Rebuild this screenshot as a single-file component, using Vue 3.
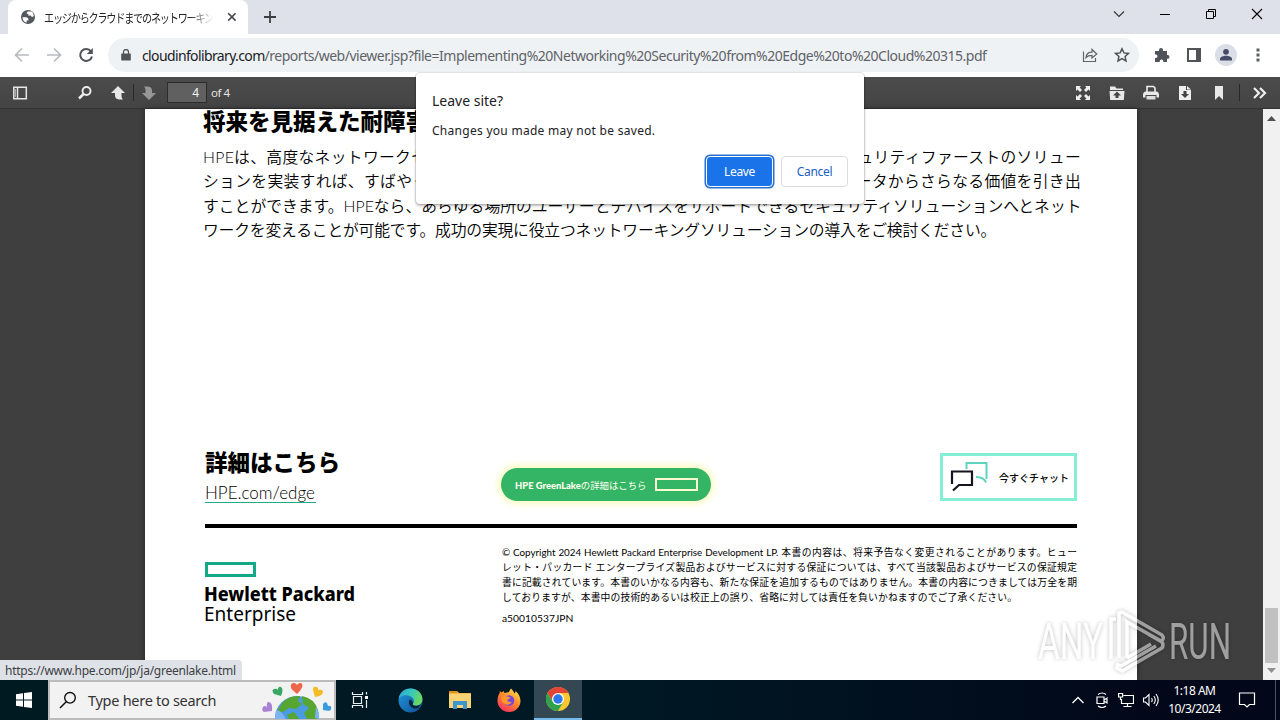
<template>
  <div class="screen">
    <!-- tab strip -->
    <header class="tabs">
      <div class="tab">
        <svg class="globe" viewBox="0 0 16 16" width="16" height="16">
          <circle cx="8" cy="8" r="7" fill="#54585c" />
          <path d="M2.6 8.2h4l1.8 1.6v1.6H6.6v2.3C4 13 2.4 11 2.6 8.2zM7.5 2.5h4.2c1.5 1.2 2 2.8 2 4.7l-1.7.8-1.5-1.5H8.3V4.7H6.5z" fill="#fff" />
        </svg>
        <div class="tab-title"><span>{{ tabTitle }}</span></div>
        <svg class="tab-close" viewBox="0 0 10 10" width="10" height="10"><path d="M1.2 1.2l7.4 7.4M8.6 1.2L1.2 8.6" stroke="#45494d" stroke-width="1.6" /></svg>
      </div>
      <svg class="new-tab" viewBox="0 0 12 12" width="12" height="12"><path d="M6 0v12M0 6h12" stroke="#3c4043" stroke-width="1.8" /></svg>
      <div class="window-buttons">
        <svg viewBox="0 0 12 12" width="12" height="12"><path d="M1 3.5l5 5 5-5" fill="none" stroke="#333" stroke-width="1.1" /></svg>
        <svg viewBox="0 0 12 12" width="12" height="12"><path d="M1 6.500h10" stroke="#000" /></svg>
        <svg viewBox="0 0 12 12" width="12" height="12"><path d="M1.5 3.5h7v7h-7zM3.5 3.5v-2h7v7h-2" fill="none" stroke="#000" /></svg>
        <svg viewBox="0 0 12 12" width="12" height="12"><path d="M1 1l10 10M11 1L1 11" stroke="#000" stroke-width="1.1" /></svg>
      </div>
    </header>

    <!-- address row -->
    <div class="address-row">
      <div class="nav-buttons">
        <svg viewBox="0 0 16 16" width="16" height="16"><path d="M15 8H2M8 1.5L1.5 8 8 14.5" fill="none" stroke="#b9bbbe" stroke-width="1.7" /></svg>
        <svg viewBox="0 0 16 16" width="16" height="16"><path d="M1 8h13M8 1.5L14.5 8 8 14.5" fill="none" stroke="#b9bbbe" stroke-width="1.7" /></svg>
        <svg viewBox="0 0 16 16" width="16" height="16"><path d="M13 4.3A6 6 0 1 0 14 9.5" fill="none" stroke="#505458" stroke-width="2" /><path d="M14.8 1v6H8.8z" fill="#505458" /></svg>
      </div>
      <div class="omnibox">
        <svg class="lock" viewBox="0 0 10 12" width="10" height="12"><path d="M1 4.5h8q.8 0 .8.8v5.4q0 .9-.9.9H1.1q-.9 0-.9-.9V5.3q0-.8.8-.8z" fill="#505458" /><path d="M2.5 5V3a2.5 2.5 0 0 1 5 0v2" fill="none" stroke="#505458" stroke-width="1.3" /></svg>
        <div class="url"><b>cloudinfolibrary.com</b>{{ urlPath }}</div>
        <svg class="share" viewBox="0 0 16 16" width="16" height="16"><path d="M1.500 4.500v10h12v-3.500M4 10.500c.3-3.500 2.400-5.300 6-5.300V2.500L14.800 7 10 11V8.300c-2.800 0-4.600.5-6 2.200z" fill="none" stroke="#5f6368" stroke-width="1.200" /></svg>
        <svg viewBox="0 0 16 16" width="16" height="16"><path d="M8 1.800l1.900 4.100 4.600.5-3.400 3.100.9 4.500L8 11.700 4 14l.9-4.500-3.400-3.100 4.600-.5z" fill="none" stroke="#505458" stroke-width="1.500" /></svg>
      </div>
      <div class="extensions">
        <svg viewBox="0 0 16 16" width="16" height="16"><path d="M1 4h4V3a2 2 0 0 1 4 0v1h4v4h.6a1.900 1.900 0 0 1 0 3.800H13V15H9.300v-.8a1.800 1.800 0 0 0-3.600 0v.8H1v-4h.8a1.700 1.700 0 0 0 0-3.400H1z" fill="#505458" /></svg>
        <svg viewBox="0 0 16 16" width="16" height="16"><path d="M1 1h14v14H1zM3 3v10h7V3z" fill="#505458" fill-rule="evenodd" /></svg>
        <svg viewBox="0 0 22 22" width="22" height="22"><circle cx="11" cy="11" r="11" fill="#dcdee7" /><circle cx="11" cy="7.800" r="2.900" fill="#474c66" /><path d="M5 16.500v-1.400c0-2.300 3.500-3.300 6-3.300s6 1 6 3.300v1.400z" fill="#474c66" /></svg>
        <svg viewBox="0 0 4 16" width="4" height="16"><path d="M.5 1.500h3v3h-3zM.5 6.500h3v3h-3zM.5 11.500h3v3h-3z" fill="#5a5e62" /></svg>
      </div>
    </div>

    <!-- pdf viewer toolbar -->
    <div class="viewer-bar">
      <svg class="sidebar-icon" viewBox="0 0 16 16" width="16" height="16"><path d="M1.800 2.300h12.500v11.500H1.800zM5.500 2v12" fill="none" stroke="#e6e6e6" stroke-width="1.500" /><path d="M3.500 4v8" stroke="#aaa" /></svg>
      <svg class="find-icon" viewBox="0 0 16 16" width="16" height="16"><circle cx="9.500" cy="6" r="4" fill="none" stroke="#eee" stroke-width="1.900" /><path d="M6.500 9L2 13.500" stroke="#eee" stroke-width="2.500" /></svg>
      <svg class="up-icon" viewBox="0 0 16 16" width="16" height="16"><path d="M8 1l7 7h-3.500v3q0 2 1.500 3.500H9Q5 14 5 10.500V8H1z" fill="#e8e8e8" /></svg>
      <i class="split"></i>
      <svg class="down-icon" viewBox="0 0 16 16" width="16" height="16"><path d="M8 15l7-7h-4V5.500Q11 2 7 1.500H3Q4.500 3 4.500 5v3H1z" fill="#969696" /></svg>
      <div class="page-number">4</div>
      <span class="page-count">of 4</span>
      <div class="viewer-tools">
        <svg viewBox="0 0 16 16" width="16" height="16"><path d="M1 1h5L4.600 2.500 7 5 5 7 2.500 4.600 1 6zM15 1v5l-1.500-1.400L11 7 9 5l2.400-2.500L10 1zM1 15v-5l1.500 1.400L5 9l2 2-2.400 2.500L6 15zM15 15h-5l1.400-1.500L9 11l2-2 2.500 2.400L15 10z" fill="#eee" /></svg>
        <svg viewBox="0 0 16 16" width="16" height="16"><path d="M1 1.500h5l1.500 2H14V5H1zM.5 6h15l-.7 9H1.200z" fill="#e8e8e8" /><path d="M8 6.500l4 4H9.500V13h-3v-2.500H4z" fill="#444" /></svg>
        <svg viewBox="0 0 16 16" width="16" height="16"><path d="M4 7V1.500h6.500L12 3v4" fill="none" stroke="#eee" stroke-width="1.600" /><path d="M2 6.500h12q2 1 2 3v3h-2.500V10h-11v2.500H0v-3q0-2 2-3z" fill="#e8e8e8" /><path d="M3.500 11h9v3.500h-9z" fill="#ddd" /></svg>
        <svg viewBox="0 0 16 16" width="16" height="16"><path d="M2 1h7v4h5v10H2zM10 1l4 3.500h-4z" fill="#eee" /><path d="M6.500 6h3v3H12l-4 4-4-4h2.500z" fill="#444" /></svg>
        <svg viewBox="0 0 16 16" width="16" height="16"><path d="M4 1h8v14l-4-4-4 4z" fill="#e8e8e8" /></svg>
        <i class="split"></i>
        <svg viewBox="0 0 16 16" width="16" height="16"><path d="M2 3l5 5-5 5M8 3l5 5-5 5" fill="none" stroke="#eee" stroke-width="2.200" /></svg>
      </div>
    </div>

    <!-- document -->
    <main class="viewer">
      <article class="page">
        <h2>将来を見据えた耐障害性</h2>
        <div class="body-text">
          <p class="split-line"><span>HPEは、高度なネットワークセ</span><span>キュリティファーストのソリュー</span></p>
          <p class="split-line"><span>ションを実装すれば、すばやく</span><span>データからさらなる価値を引き出</span></p>
          <p>すことができます。HPEなら、あらゆる場所のユーザーとデバイスをサポートできるセキュリティソリューションへとネット</p>
          <p class="last">ワークを変えることが可能です。成功の実現に役立つネットワーキングソリューションの導入をご検討ください。</p>
        </div>
        <section class="more">
          <div class="more-links">
            <h2>詳細はこちら</h2>
            <a>HPE.com/edge</a>
          </div>
          <div class="greenlake"><span><b>HPE GreenLake</b>の詳細はこちら</span><i></i></div>
          <div class="chat">
            <svg viewBox="0 0 38 32" width="38" height="32">
              <path d="M16.500 8V2h20v16M36 21.500q-2-5.500-10-5.500" fill="none" stroke="#5fd3be" stroke-width="2" />
              <path d="M2 23V10.500h20V24H9l-6 5.500" fill="none" stroke="#15151f" stroke-width="2.200" />
            </svg>
            <span>今すぐチャット</span>
          </div>
        </section>
        <footer class="foot">
          <svg class="hpe-logo" viewBox="0 0 152 66" width="152" height="66">
            <rect x="1.500" y="1.500" width="48" height="12" fill="none" stroke="#14a887" stroke-width="3" />
            <text x="-1" y="39" class="logo-bold" textLength="151" lengthAdjust="spacingAndGlyphs">Hewlett Packard</text>
            <text x="-1" y="58.500" class="logo-thin" textLength="92" lengthAdjust="spacingAndGlyphs">Enterprise</text>
          </svg>
          <div class="legal">
            <p v-for="line in legal" :key="line">{{ line }}</p>
            <p class="code">a50010537JPN</p>
          </div>
        </footer>
      </article>
      <div class="scrollbar">
        <svg viewBox="0 0 9 5" width="9" height="5"><path d="M0 5l4.500-5L9 5z" fill="#505050" /></svg>
        <i class="thumb"></i>
        <svg viewBox="0 0 9 5" width="9" height="5"><path d="M0 0h9L4.500 5z" fill="#909090" /></svg>
      </div>
    </main>

    <!-- windows taskbar -->
    <nav class="taskbar">
      <div class="start"><svg viewBox="0 0 16 16" width="16" height="16"><path d="M0 2.200l7-1v6.300H0zM8 1.100L16 0v7.500H8zM0 8.500h7v6.300l-7-1zM8 8.500h8V16l-8-1.100z" fill="#fff" /></svg></div>
      <div class="search">
        <svg viewBox="0 0 18 18" width="18" height="18"><circle cx="11" cy="6.800" r="5.300" fill="none" stroke="#111" stroke-width="1.400" /><path d="M7.200 10.800L1 17" stroke="#111" stroke-width="1.500" /></svg>
        <span>Type here to search</span>
        <svg class="earth" viewBox="0 0 72 38" width="72" height="38">
          <circle cx="36" cy="37" r="22" fill="#4b9be2" />
          <path d="M22 21q7-7 17-6l-2 5 4 3-6 5-7-1-6 4-6-1zM41 15q12 2 16 14l1 9H46l-3-6 5-5-6-4zM26 34l7-3 5 7H28z" fill="#57a632" />
          <path d="M15 29q3 0 6 3l4 6H14zM55 26q4 6 3 12l-4-1z" fill="#7ab4f2" />
          <path d="M36 13l-5.500-5q-2-5 1.500-6 3-.5 4 2 2-3 5-1.500 2 4-5 10.500z" fill="#ef674b" />
          <path d="M20 15l-7-2q-3-4 0-5 3-1 4 1 0-4 3-3 3 2 0 9z" fill="#38a763" />
          <path d="M54 16l-2-7q0-4 3-3 3 0 2 3 5-1 5 2 0 4-8 5z" fill="#f4bd26" />
          <path d="M11 30l-8 1q-3-2-1-5 2-2 4 0-1-5 2-5 4 1 3 9z" fill="#aa82d3" />
          <path d="M62 29l0-6q2-3 4-1l1 3q4-1 3 3 0 3-8 1z" fill="#3b9be0" />
        </svg>
      </div>
      <div class="apps">
        <div class="app"><svg class="task-view" viewBox="0 0 18 18" width="18" height="18"><path d="M1.500 1v2.500h10V1M2.500 5.500h8v7h-8zM1.500 17v-2.500h10V17M15.500 1v2.500M15.500 9v8" fill="none" stroke="#e8eef0" stroke-width="1.200" /><path d="M14 5h3v3h-3z" fill="#fff" /></svg></div>
        <div class="app">
          <svg viewBox="0 0 24 24" width="25" height="25">
            <defs>
              <linearGradient id="edgeTop" x1="0" y1="0" x2="1" y2="0.300"><stop offset="0" stop-color="#2ba5dd" /><stop offset="0.600" stop-color="#3cc9b6" /><stop offset="1" stop-color="#6ad860" /></linearGradient>
              <linearGradient id="edgeLow" x1="0" y1="0" x2="1" y2="1"><stop offset="0" stop-color="#229cdf" /><stop offset="1" stop-color="#0e4c94" /></linearGradient>
            </defs>
            <circle cx="12" cy="12" r="11.500" fill="url(#edgeLow)" />
            <path d="M.7 10C2 3.500 7 .5 12 .5c7 0 11.500 5 11.500 10.500 0 4-3.500 6-6.500 6-2.500 0-3.500-1-2.500-2.200 3.200-4.800-3.500-8.800-8-7.800C3.500 7.500 1.500 9 .7 10z" fill="url(#edgeTop)" />
            <path d="M14.500 14.800c-1 1.200 0 2.200 2.500 2.200 1.800 0 3.500-.6 4.700-1.500q-.5 1.900-2.500 4C13 21 9 16 11 11q3 .5 3.500 3.800z" fill="#08263f" />
          </svg>
        </div>
        <div class="app"><svg viewBox="0 0 22 20" width="22" height="20"><path d="M0 1h8l2 2h12v15H0z" fill="#eeb84b" /><path d="M0 4h22v14H0z" fill="#fad375" /><path d="M4 19v-8h14v8h-4v-4H8v4z" fill="#3f95ce" /><path d="M0 1h8v2H0z" fill="#dd931f" /></svg></div>
        <div class="app">
          <svg viewBox="0 0 24 24" width="24" height="24">
            <defs><linearGradient id="fox" x1="0.800" y1="0" x2="0.200" y2="1"><stop offset="0" stop-color="#ffe14a" /><stop offset="0.450" stop-color="#ff8b2d" /><stop offset="1" stop-color="#f72b62" /></linearGradient></defs>
            <path d="M14 .5q3 3 3.500 5 1-1 1-2.500c3.500 3 5 6.500 5 10A11.500 11 0 0 1 .5 13C.5 9.500 1.300 7 2.700 5V3l2 1.500L6.500 3l1 2L12 4q.5-2 2-3.500z" fill="url(#fox)" />
            <circle cx="12" cy="12.500" r="5.300" fill="#7846dd" />
            <path d="M4.500 9.500q3-2 6-1l3 1q-1 2-3.500 2.200 1 3 5 2Q12 18 8 16t-3.500-6.500z" fill="#ff9a28" />
          </svg>
        </div>
        <div class="app active">
          <svg viewBox="0 0 24 24" width="24" height="24">
            <circle cx="12" cy="12" r="12" fill="#fdc82f" />
            <path d="M12 6h10.400A12 12 0 0 0 1.600 6l5.200 9z" fill="#e54335" />
            <path d="M1.600 6A12 12 0 0 0 12 24l5.200-9H6.800z" fill="#2fa24f" />
            <circle cx="12" cy="12" r="6" fill="#fff" /><circle cx="12" cy="12" r="4.700" fill="#2a78ec" />
          </svg>
        </div>
      </div>
      <div class="tray">
        <svg viewBox="0 0 16 16" width="16" height="16"><path d="M2.500 11L8 5.500l5.500 5.500" fill="none" stroke="#fff" stroke-width="1.300" /></svg>
        <svg viewBox="0 0 16 16" width="16" height="16"><path d="M3 5h7v6.500H3zM10 8l3-2v5l-3-2M4 2.500q4-3 8 0M4 14q4 3 8 0" fill="none" stroke="#fff" stroke-width="1.200" /></svg>
        <svg viewBox="0 0 16 16" width="16" height="16"><path d="M5.500 3.500h10v8h-12V7M9.500 11.500v3M5.500 14.500h8M.6 1.500h4v3.500h-4zM2.500 5v3" fill="none" stroke="#fff" stroke-width="1.200" /></svg>
        <svg viewBox="0 0 18 16" width="18" height="16"><path d="M1.500 6h2l3.500-3.500v11L3.500 10h-2zM9.500 6q1.500 2 0 4M11.800 4q3 4 0 8M14 2q4.500 6 0 12" fill="none" stroke="#fff" stroke-width="1.100" /></svg>
      </div>
      <div class="clock"><span>1:18 AM</span><span>10/3/2024</span></div>
      <svg class="notice" viewBox="0 0 18 18" width="18" height="18"><path d="M1.500 2h15v11.500h-5L9 16l-2.500-2.500h-5z" fill="none" stroke="#fff" stroke-width="1.200" /></svg>
      <i class="desktop-edge"></i>
    </nav>

    <!-- leave dialog -->
    <div class="dialog">
      <h3>Leave site?</h3>
      <p>Changes you made may not be saved.</p>
      <div class="actions">
        <button class="leave">Leave</button>
        <button class="cancel">Cancel</button>
      </div>
    </div>

    <div class="status">https://www.hpe.com/jp/ja/greenlake.html</div>

    <svg class="watermark" viewBox="0 0 200 70" width="200" height="70">
      <text x="2" y="53" textLength="65" lengthAdjust="spacingAndGlyphs">ANY</text>
      <path d="M80 13h-5v40M83 52V7l3-1 40 23q3 4-1 6L91 16v36M112 28l14 8q2 3 0 6L86 65l-7-4M80 58l5 2 35-20M91 52l24-14" />
      <text x="133" y="53" textLength="62" lengthAdjust="spacingAndGlyphs">RUN</text>
    </svg>
  </div>
</template>

<script setup>
const tabTitle = 'エッジからクラウドまでのネットワーキン'
const urlPath = '/reports/web/viewer.jsp?file=Implementing%20Networking%20Security%20from%20Edge%20to%20Cloud%20315.pdf'

// small print, one entry per printed line
const legal = [
  '© Copyright 2024 Hewlett Packard Enterprise Development LP. 本書の内容は、将来予告なく変更されることがあります。ヒュー',
  'レット・パッカード エンタープライズ製品およびサービスに対する保証については、すべて当該製品およびサービスの保証規定',
  '書に記載されています。本書のいかなる内容も、新たな保証を追加するものではありません。本書の内容につきましては万全を期',
  'しておりますが、本書中の技術的あるいは校正上の誤り、省略に対しては責任を負いかねますのでご了承ください。'
]
</script>

<style>
body {
  overflow: hidden;
}
</style>

<style scoped>
* {
  box-sizing: border-box;
}

.screen {
  position: relative;
  display: flex;
  flex-direction: column;
  width: 1280px;
  height: 720px;
  overflow: hidden;
  font-family: "Noto Sans", "Noto Sans CJK JP", sans-serif;
}

svg {
  display: block;
  flex: none;
}

h2, h3, p {
  margin: 0;
}

/* tabs */
.tabs {
  display: flex;
  height: 34px;
  background: #dee1e9;
}

.tab {
  display: flex;
  align-items: center;
  width: 240px;
  margin-left: 8px;
  padding: 0 11px 0 12px;
  border-radius: 8px 8px 0 0;
  background: #fff;
}

.tab-title {
  width: 170px;
  margin: 0 13px 0 8px;
  white-space: nowrap;
  font: 12.5px "Noto Sans CJK JP", sans-serif;
  color: #222;
  -webkit-mask-image: linear-gradient(90deg, #000 145px, transparent);
  mask-image: linear-gradient(90deg, #000 145px, transparent);
}

.tab-title span {
  display: inline-block;
  letter-spacing: -1.5px;
  transform: scaleX(0.81);
  transform-origin: 0 50%;
}

.new-tab {
  margin: 11px 0 0 16px;
}

.window-buttons {
  display: flex;
  gap: 34px;
  margin: 8px 17px 0 auto;
}

/* address row */
.address-row {
  display: flex;
  align-items: center;
  height: 43px;
  padding-bottom: 1px;
  background: #fff;
}

.nav-buttons {
  display: flex;
  gap: 16px;
  padding-left: 14px;
}

.omnibox {
  display: flex;
  align-items: center;
  gap: 16px;
  width: 1031px;
  height: 34px;
  margin-left: 14px;
  padding: 0 9px 0 13px;
  border-radius: 17px;
  background: #eff2f5;
}

.url {
  flex: 1;
  margin-left: -5px;
  white-space: nowrap;
  font-size: 14px;
  letter-spacing: -0.49px;
  color: #5f6368;
}

.url b {
  font-weight: 400;
  letter-spacing: -0.63px;
  color: #202124;
}

.extensions {
  display: flex;
  align-items: center;
  gap: 16px;
  padding-left: 15px;
}

.extensions svg:nth-child(3) {
  margin: 0 -3px;
}

.extensions svg:nth-child(4) {
  margin-left: 6px;
}

/* viewer toolbar */
.viewer-bar {
  display: flex;
  align-items: center;
  height: 32px;
  padding: 0 12px;
  border-bottom: 1px solid #333;
  background: linear-gradient(#4b4b4b, #444);
  color: #e4e4e4;
}

.find-icon {
  margin-left: 49px;
}

.up-icon {
  margin-left: 17px;
}

.split {
  width: 1px;
  height: 17px;
  margin: 0 7px;
  background: #282828;
}

.page-number {
  width: 40px;
  height: 21px;
  margin-left: 10px;
  padding-right: 7px;
  border: 1px solid #2c2c2c;
  background: #606060;
  font-size: 12px;
  line-height: 19px;
  text-align: right;
  color: #f2f2f2;
}

.page-count {
  margin-left: 4px;
  font-size: 11.5px;
  letter-spacing: -0.5px;
}

.viewer-tools {
  display: flex;
  align-items: center;
  gap: 18px;
  margin-left: auto;
}

.viewer-tools .split {
  margin: 0 -6px 0 -6px;
}

/* document */
.viewer {
  display: flex;
  height: 571px;
  background: #3f3f3f;
}

.page {
  width: 992px;
  margin-left: 145px;
  padding-left: 58px;
  background: #fff;
  color: #000;
  font-family: Lato, "Noto Sans CJK JP", sans-serif;
  box-shadow: 0 0 6px rgba(0, 0, 0, 0.4);
}

h2 {
  height: 36px;
  font: 900 22.5px/23px "Noto Sans CJK JP", sans-serif;
}

.body-text {
  width: 878px;
  height: 306px;
  font-size: 15.8px;
  font-weight: 350;
  line-height: 24.3px;
}

.body-text p {
  height: 24.3px;
  text-align: justify;
  text-align-last: justify;
  white-space: nowrap;
}

.body-text p.last {
  width: 793px;
  letter-spacing: -0.32px;
}

.body-text .split-line {
  display: flex;
  justify-content: space-between;
  letter-spacing: 0.3px;
}

.more {
  display: flex;
  justify-content: space-between;
  align-items: flex-start;
  width: 872px;
  height: 77px;
  margin-left: 2px;
  border-bottom: 4px solid #000;
}

.more-links {
  width: 294px;
}

.more-links h2 {
  height: 33px;
  line-height: 21px;
}

.more-links a {
  display: block;
  width: 111px;
  height: 19px;
  border-bottom: 1px solid #20a98b;
  font-size: 17px;
  font-weight: 300;
  line-height: 18px;
  white-space: nowrap;
}

.greenlake {
  display: flex;
  align-items: center;
  justify-content: space-between;
  width: 210px;
  height: 33px;
  margin: 17px auto 0 2px;
  padding: 0 13px 0 14px;
  border-radius: 17px;
  background: #34b566;
  box-shadow: 0 0 7px 3px #fbfbc0;
  font-size: 9.4px;
  white-space: nowrap;
  color: #fffff0;
}

.greenlake b {
  font-weight: 900;
}

.greenlake i {
  width: 43px;
  height: 13px;
  border: 2px solid #fbfbd0;
}

.chat {
  display: flex;
  align-items: center;
  gap: 11px;
  width: 137px;
  height: 48px;
  margin-top: 2px;
  padding-left: 7px;
  border: 3px solid #84efd7;
  font: 500 10px "Noto Sans CJK JP", sans-serif;
  white-space: nowrap;
}

.foot {
  display: flex;
  width: 874px;
  margin-left: 2px;
}

.hpe-logo {
  margin: 34px 145px 0 0;
  overflow: visible;
}

.logo-bold {
  font: 800 19.5px "Noto Sans", sans-serif;
}

.logo-thin {
  font: 400 19.5px "Noto Sans", sans-serif;
}

.legal {
  width: 575px;
  padding-top: 17px;
  font-size: 9.8px;
  line-height: 15px;
}

.legal p {
  height: 15px;
  text-align: justify;
  text-align-last: justify;
  white-space: nowrap;
}

.legal p:nth-child(4) {
  width: 515px;
}

.legal .code {
  margin-top: 6px;
  font-size: 10.3px;
  text-align-last: left;
}

.scrollbar {
  display: flex;
  flex-direction: column;
  align-items: center;
  width: 17px;
  margin-left: auto;
  padding: 7px 0;
  background: #f1f1f1;
}

.thumb {
  width: 13px;
  height: 55px;
  margin: auto 0 5px;
  background: #c1c1c1;
}

/* taskbar */
.taskbar {
  display: flex;
  align-items: center;
  height: 40px;
  background: linear-gradient(90deg, #001a22, #001824 50%, #020819 90%);
}

.start {
  width: 48px;
  padding-left: 16px;
}

.search {
  display: flex;
  align-items: center;
  width: 288px;
  height: 40px;
  padding-left: 9px;
  border: 2px solid #bcbcbc;
  background: #f2f2f2;
  font-size: 14.5px;
  letter-spacing: -0.28px;
  color: #333;
}

.search span {
  margin-left: 11px;
  white-space: nowrap;
}

.search .earth {
  margin: 0 1px 0 auto;
}

.apps {
  display: flex;
  height: 40px;
}

.app {
  display: flex;
  align-items: center;
  justify-content: center;
  width: 49.5px;
}

.app.active {
  width: 48px;
  border-bottom: 2px solid #76b9ed;
  background: #334852;
}

.task-view {
  margin-right: 2px;
}

.tray {
  display: flex;
  gap: 8px;
  margin-left: auto;
}

.clock {
  display: flex;
  flex-direction: column;
  align-items: center;
  width: 69px;
  font: 12px/18px "Noto Sans", sans-serif;
  letter-spacing: -0.5px;
  color: #fff;
}

.notice {
  margin: 0 19px 0 9px;
}

.desktop-edge {
  width: 1px;
  height: 40px;
  margin-right: 4px;
  background: #4b5261;
}

/* overlays */
.dialog {
  position: absolute;
  top: 73px;
  left: 416px;
  width: 448px;
  height: 131px;
  padding: 16px;
  border-radius: 4px;
  background: #fff;
  box-shadow: 0 0 1px 1px rgba(0, 0, 0, 0.12), 0 2px 3px rgba(0, 0, 0, 0.25);
  color: #202124;
}

.dialog h3 {
  height: 32px;
  font-size: 14px;
  font-weight: 400;
  line-height: 23px;
}

.dialog p {
  font-size: 12px;
  letter-spacing: 0.28px;
  line-height: 20px;
}

.actions {
  display: flex;
  justify-content: flex-end;
  gap: 8px;
  margin-top: 15px;
}

.actions button {
  width: 67px;
  height: 31px;
  padding: 0;
  border: 1px solid #dadce0;
  border-radius: 4px;
  background: #fff;
  font: 12px "Noto Sans", sans-serif;
  letter-spacing: -0.3px;
  color: #1a62c4;
}

.actions .leave {
  border: 1px solid #fff;
  background: #1a73e8;
  box-shadow: 0 0 0 1.5px #2c70cf;
  color: #fff;
}

.status {
  position: absolute;
  top: 660px;
  left: 0;
  width: 242px;
  height: 20px;
  padding-left: 5px;
  border-radius: 0 4px 0 0;
  background: #dee1e6;
  font-size: 12px;
  letter-spacing: -0.24px;
  line-height: 21px;
  white-space: nowrap;
  color: #3c4043;
}

.watermark {
  position: absolute;
  top: 606px;
  left: 1036px;
  overflow: visible;
  filter: drop-shadow(0 0 2px rgba(0, 0, 0, 0.5));
  opacity: 0.5;
}

.watermark text {
  font: 400 50px Roboto, sans-serif;
  fill: #fff;
}

.watermark path {
  fill: none;
  stroke: #fff;
  stroke-width: 3.5;
}
</style>
